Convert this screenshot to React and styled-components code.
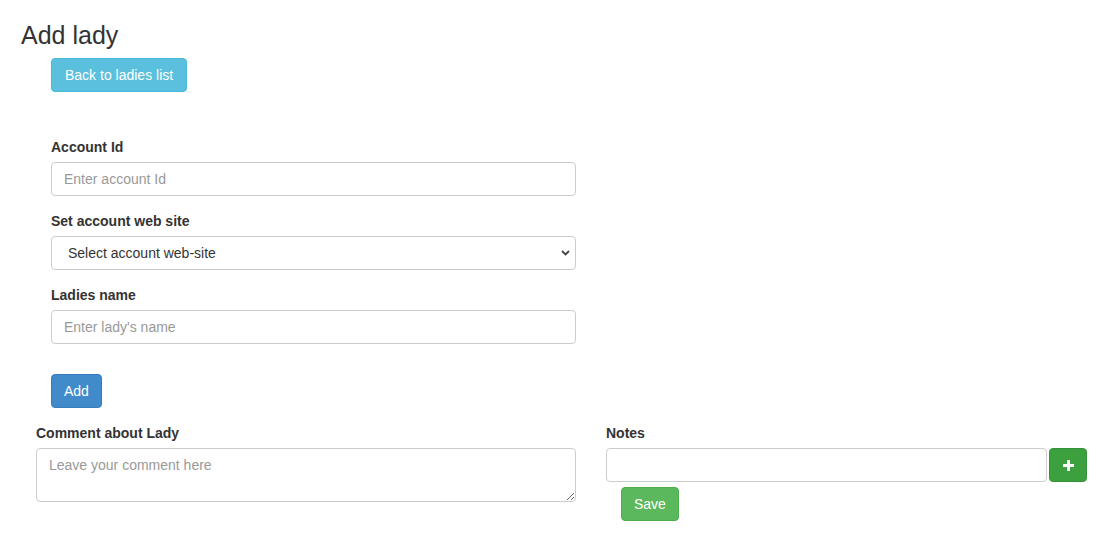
import React from "react";
import styled, { createGlobalStyle } from "styled-components";

const Global = createGlobalStyle`
  html, body { margin: 0; padding: 0; background: #fff; }
  body {
    font-family: "Liberation Sans", Arial, Helvetica, sans-serif;
    font-size: 14px;
    line-height: 1.42857;
    color: #333;
  }
  * { box-sizing: border-box; }
`;

const Page = styled.div`
  padding: 21px 0 0 21px;
  width: 1103px;
`;

const Title = styled.h3`
  margin: 0;
  font-size: 25px;
  font-weight: 500;
  line-height: 28px;
  color: #333;
`;

const Section = styled.div`
  padding-left: 30px;
  width: 555px;
`;

const Btn = styled.button`
  display: inline-block;
  height: 34px;
  padding: 6px ${(p) => p.$px || "12px"};
  font-family: inherit;
  font-size: 14px;
  line-height: 20px;
  color: #fff;
  border-radius: 4px;
  border: 1px solid ${(p) => p.$border};
  background: ${(p) => p.$bg};
  cursor: pointer;
  margin: ${(p) => p.$margin || "0"};
`;

const Form = styled.form`
  margin-top: 45px;
`;

const Group = styled.div`
  margin-bottom: 15px;
`;

const Label = styled.label`
  display: block;
  font-weight: 700;
  margin-bottom: 5px;
  line-height: 20px;
`;

const Input = styled.input`
  display: block;
  width: 100%;
  height: 34px;
  padding: 6px 12px;
  font-family: inherit;
  font-size: 14px;
  line-height: 20px;
  color: #555;
  background: #fff;
  border: 1px solid #ccc;
  border-radius: 4px;
  outline: none;
  &::placeholder { color: #999; }
`;

const SelectWrap = styled.div`
  position: relative;
`;

const Select = styled.select`
  display: block;
  width: 100%;
  height: 34px;
  padding: 6px 12px 6px 16px;
  font-family: inherit;
  font-size: 14px;
  color: #333;
  background: #fff;
  border: 1px solid #ccc;
  border-radius: 4px;
  appearance: none;
  outline: none;
`;

const Chevron = styled.svg`
  position: absolute;
  right: 6px;
  top: 14px;
  pointer-events: none;
`;

const AddRow = styled.div`
  margin-top: 30px;
`;

const Bottom = styled.div`
  display: grid;
  grid-template-columns: 540px 481px;
  column-gap: 30px;
  margin-top: 15px;
  padding-left: 15px;
`;

const Col = styled.div``;

const TextArea = styled.textarea`
  display: block;
  width: 100%;
  height: 54px;
  padding: 6px 12px;
  font-family: inherit;
  font-size: 14px;
  line-height: 20px;
  color: #555;
  border: 1px solid #ccc;
  border-radius: 4px;
  resize: vertical;
  outline: none;
  &::placeholder { color: #999; }
`;

const InputGroup = styled.div`
  display: flex;
  gap: 2px;
`;

const IconBtn = styled.button`
  flex: 0 0 38px;
  height: 34px;
  display: flex;
  align-items: center;
  justify-content: center;
  background: #3ca03f;
  border: 1px solid #36923a;
  border-radius: 4px;
  padding: 0;
  cursor: pointer;
`;

export default function App() {
  return (
    <>
      <Global />
      <Page>
        <Title>Add lady</Title>
        <Section>
          <Btn $bg="#5bc0de" $border="#46b8da" $margin="9px 0 0 0" $px="13px">
            Back to ladies list
          </Btn>
          <Form onSubmit={(e) => e.preventDefault()}>
            <Group>
              <Label>Account Id</Label>
              <Input placeholder="Enter account Id" />
            </Group>
            <Group>
              <Label>Set account web site</Label>
              <SelectWrap>
                <Select defaultValue="">
                  <option value="">Select account web-site</option>
                </Select>
                <Chevron width="9" height="6" viewBox="0 0 9 6">
                  <path d="M1 1 L4.5 4.5 L8 1" fill="none" stroke="#444" strokeWidth="1.8" />
                </Chevron>
              </SelectWrap>
            </Group>
            <Group>
              <Label>Ladies name</Label>
              <Input placeholder="Enter lady's name" />
            </Group>
            <AddRow>
              <Btn type="submit" $bg="#428bca" $border="#357ebd">Add</Btn>
            </AddRow>
          </Form>
        </Section>
        <Bottom>
          <Col>
            <Label>Comment about Lady</Label>
            <TextArea rows={2} placeholder="Leave your comment here" />
          </Col>
          <Col>
            <Label>Notes</Label>
            <InputGroup>
              <Input />
              <IconBtn aria-label="add note">
                <svg width="11" height="11" viewBox="0 0 11 11">
                  <rect x="4" y="0" width="3" height="11" fill="#fff" />
                  <rect x="0" y="4" width="11" height="3" fill="#fff" />
                </svg>
              </IconBtn>
            </InputGroup>
            <Btn $bg="#5cb85c" $border="#4cae4c" $margin="5px 0 0 15px">Save</Btn>
          </Col>
        </Bottom>
      </Page>
    </>
  );
}
